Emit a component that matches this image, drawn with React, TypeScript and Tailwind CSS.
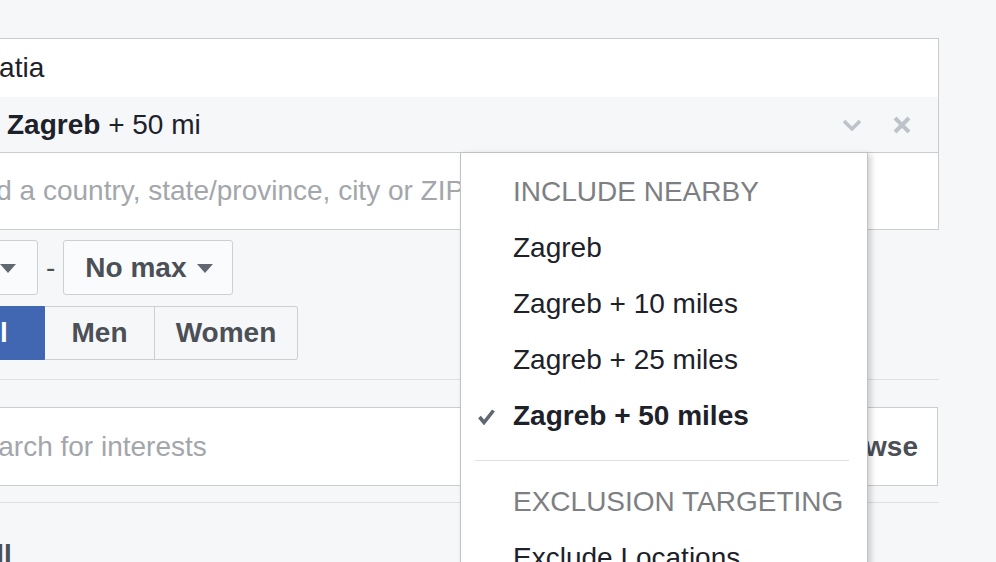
import { ReactNode } from "react"

function Caret() {
  return (
    <svg width="16" height="9" viewBox="0 0 16 9" className="shrink-0">
      <path d="M0 0 L16 0 L8 9 Z" fill="#606770" />
    </svg>
  )
}

function AgeSelect({ label, className }: { label: string; className: string }) {
  return (
    <div
      className={`h-[55px] flex items-center whitespace-nowrap rounded-[3px] border border-[#ccd0d5] bg-[#fafbfc] pl-[21px] pr-[21px] font-bold text-[#4b4f56] ${className}`}
    >
      <span>{label}</span>
      <span className="ml-[11px] mt-[2px]">
        <Caret />
      </span>
    </div>
  )
}

function MenuItem({
  children,
  checked,
  muted,
}: {
  children: ReactNode
  checked?: boolean
  muted?: boolean
}) {
  return (
    <div className="h-[56px] flex items-center whitespace-nowrap pl-[17px]">
      <span className="w-[35px] shrink-0">
        {checked && (
          <svg width="17" height="17" viewBox="0 0 17 17">
            <path
              d="M1.5 9 L6 14.5 L15.5 2.5"
              fill="none"
              stroke="#606770"
              strokeWidth="3.6"
            />
          </svg>
        )}
      </span>
      <span
        className={
          muted
            ? "text-[#7d7f83]"
            : checked
              ? "font-bold text-[#1d2129]"
              : "text-[#1d2129]"
        }
      >
        {children}
      </span>
    </div>
  )
}

export default function App() {
  return (
    <div className="relative min-h-screen h-[562px] overflow-hidden bg-[#f6f7f9] font-['Liberation_Sans',Arial,sans-serif] text-[28px] leading-none text-[#1d2129]">
      <div className="-ml-[65px] w-[1004px] pt-[38px] whitespace-nowrap">
        {/* locations */}
        <div className="border border-[#c9ccd1] bg-white">
          <div className="h-[58px] flex items-center pl-[18px]">Croatia</div>
          <div className="h-[55px] flex items-center bg-[#f6f7f9] pl-[71px] pr-[27px]">
            <span>
              <b>Zagreb</b> + 50 mi
            </span>
            <span className="ml-auto flex items-center gap-[31px]">
              <svg width="20" height="12" viewBox="0 0 20 12">
                <path
                  d="M2 2 L10 10 L18 2"
                  fill="none"
                  stroke="#bec2c9"
                  strokeWidth="3.5"
                />
              </svg>
              <svg width="18" height="18" viewBox="0 0 18 18">
                <path
                  d="M2 2 L16 16 M16 2 L2 16"
                  fill="none"
                  stroke="#bec2c9"
                  strokeWidth="4"
                />
              </svg>
            </span>
          </div>
          <div className="h-[77px] flex items-center border-t border-[#c9ccd1] pl-[26px] text-[#a3a6ab]">
            Add a country, state/province, city or ZIP
          </div>
        </div>

        {/* age */}
        <div className="mt-[10px] flex items-center">
          <AgeSelect label="18" className="w-[103px] justify-end" />
          <span className="mx-[8px] text-[#4b4f56]">-</span>
          <AgeSelect label="No max" className="w-[170px]" />
        </div>

        {/* gender */}
        <div className="mt-[11px] flex h-[54px] font-bold">
          <div className="w-[110px] flex items-center justify-center rounded-l-[3px] border border-[#4267b2] bg-[#4267b2] text-white">
            All
          </div>
          <div className="w-[110px] flex items-center justify-center border border-l-0 border-[#ccd0d5] bg-[#f6f7f9] text-[#4b4f56]">
            Men
          </div>
          <div className="w-[143px] flex items-center justify-center rounded-r-[3px] border border-l-0 border-[#ccd0d5] bg-[#f6f7f9] text-[#4b4f56]">
            Women
          </div>
        </div>

        <div className="mt-[19px] h-px bg-[#dddfe2]" />

        {/* detailed targeting */}
        <div className="mt-[27px] mr-[1px] h-[79px] flex items-center border border-[#c9ccd1] bg-white pl-[28px] pr-[19px]">
          <span className="text-[#a3a6ab]">Search for interests</span>
          <span className="ml-auto flex items-center gap-[14px] font-bold text-[#4b4f56]">
            <span>Suggestions</span>
            <span className="h-[30px] w-px bg-[#dddfe2]" />
            <span>Browse</span>
          </span>
        </div>

        <div className="mt-[16px] h-px bg-[#dddfe2]" />

        <div className="mt-[38px] pl-[41px] font-bold text-[#4b4f56]">All</div>
      </div>

      {/* radius menu */}
      <div className="absolute left-[460px] top-[152px] w-[408px] h-[430px] border border-[#bfc2c8] bg-white pt-[11px] shadow-[3px_2px_6px_rgba(0,0,0,0.18)]">
        <MenuItem muted>INCLUDE NEARBY</MenuItem>
        <MenuItem>Zagreb</MenuItem>
        <MenuItem>Zagreb + 10 miles</MenuItem>
        <MenuItem>Zagreb + 25 miles</MenuItem>
        <MenuItem checked>Zagreb + 50 miles</MenuItem>
        <div className="mt-[16px] ml-[14px] mr-[18px] h-px bg-[#dddfe2]" />
        <div className="mt-[13px]">
          <MenuItem muted>EXCLUSION TARGETING</MenuItem>
          <MenuItem>Exclude Locations</MenuItem>
        </div>
      </div>
    </div>
  )
}
